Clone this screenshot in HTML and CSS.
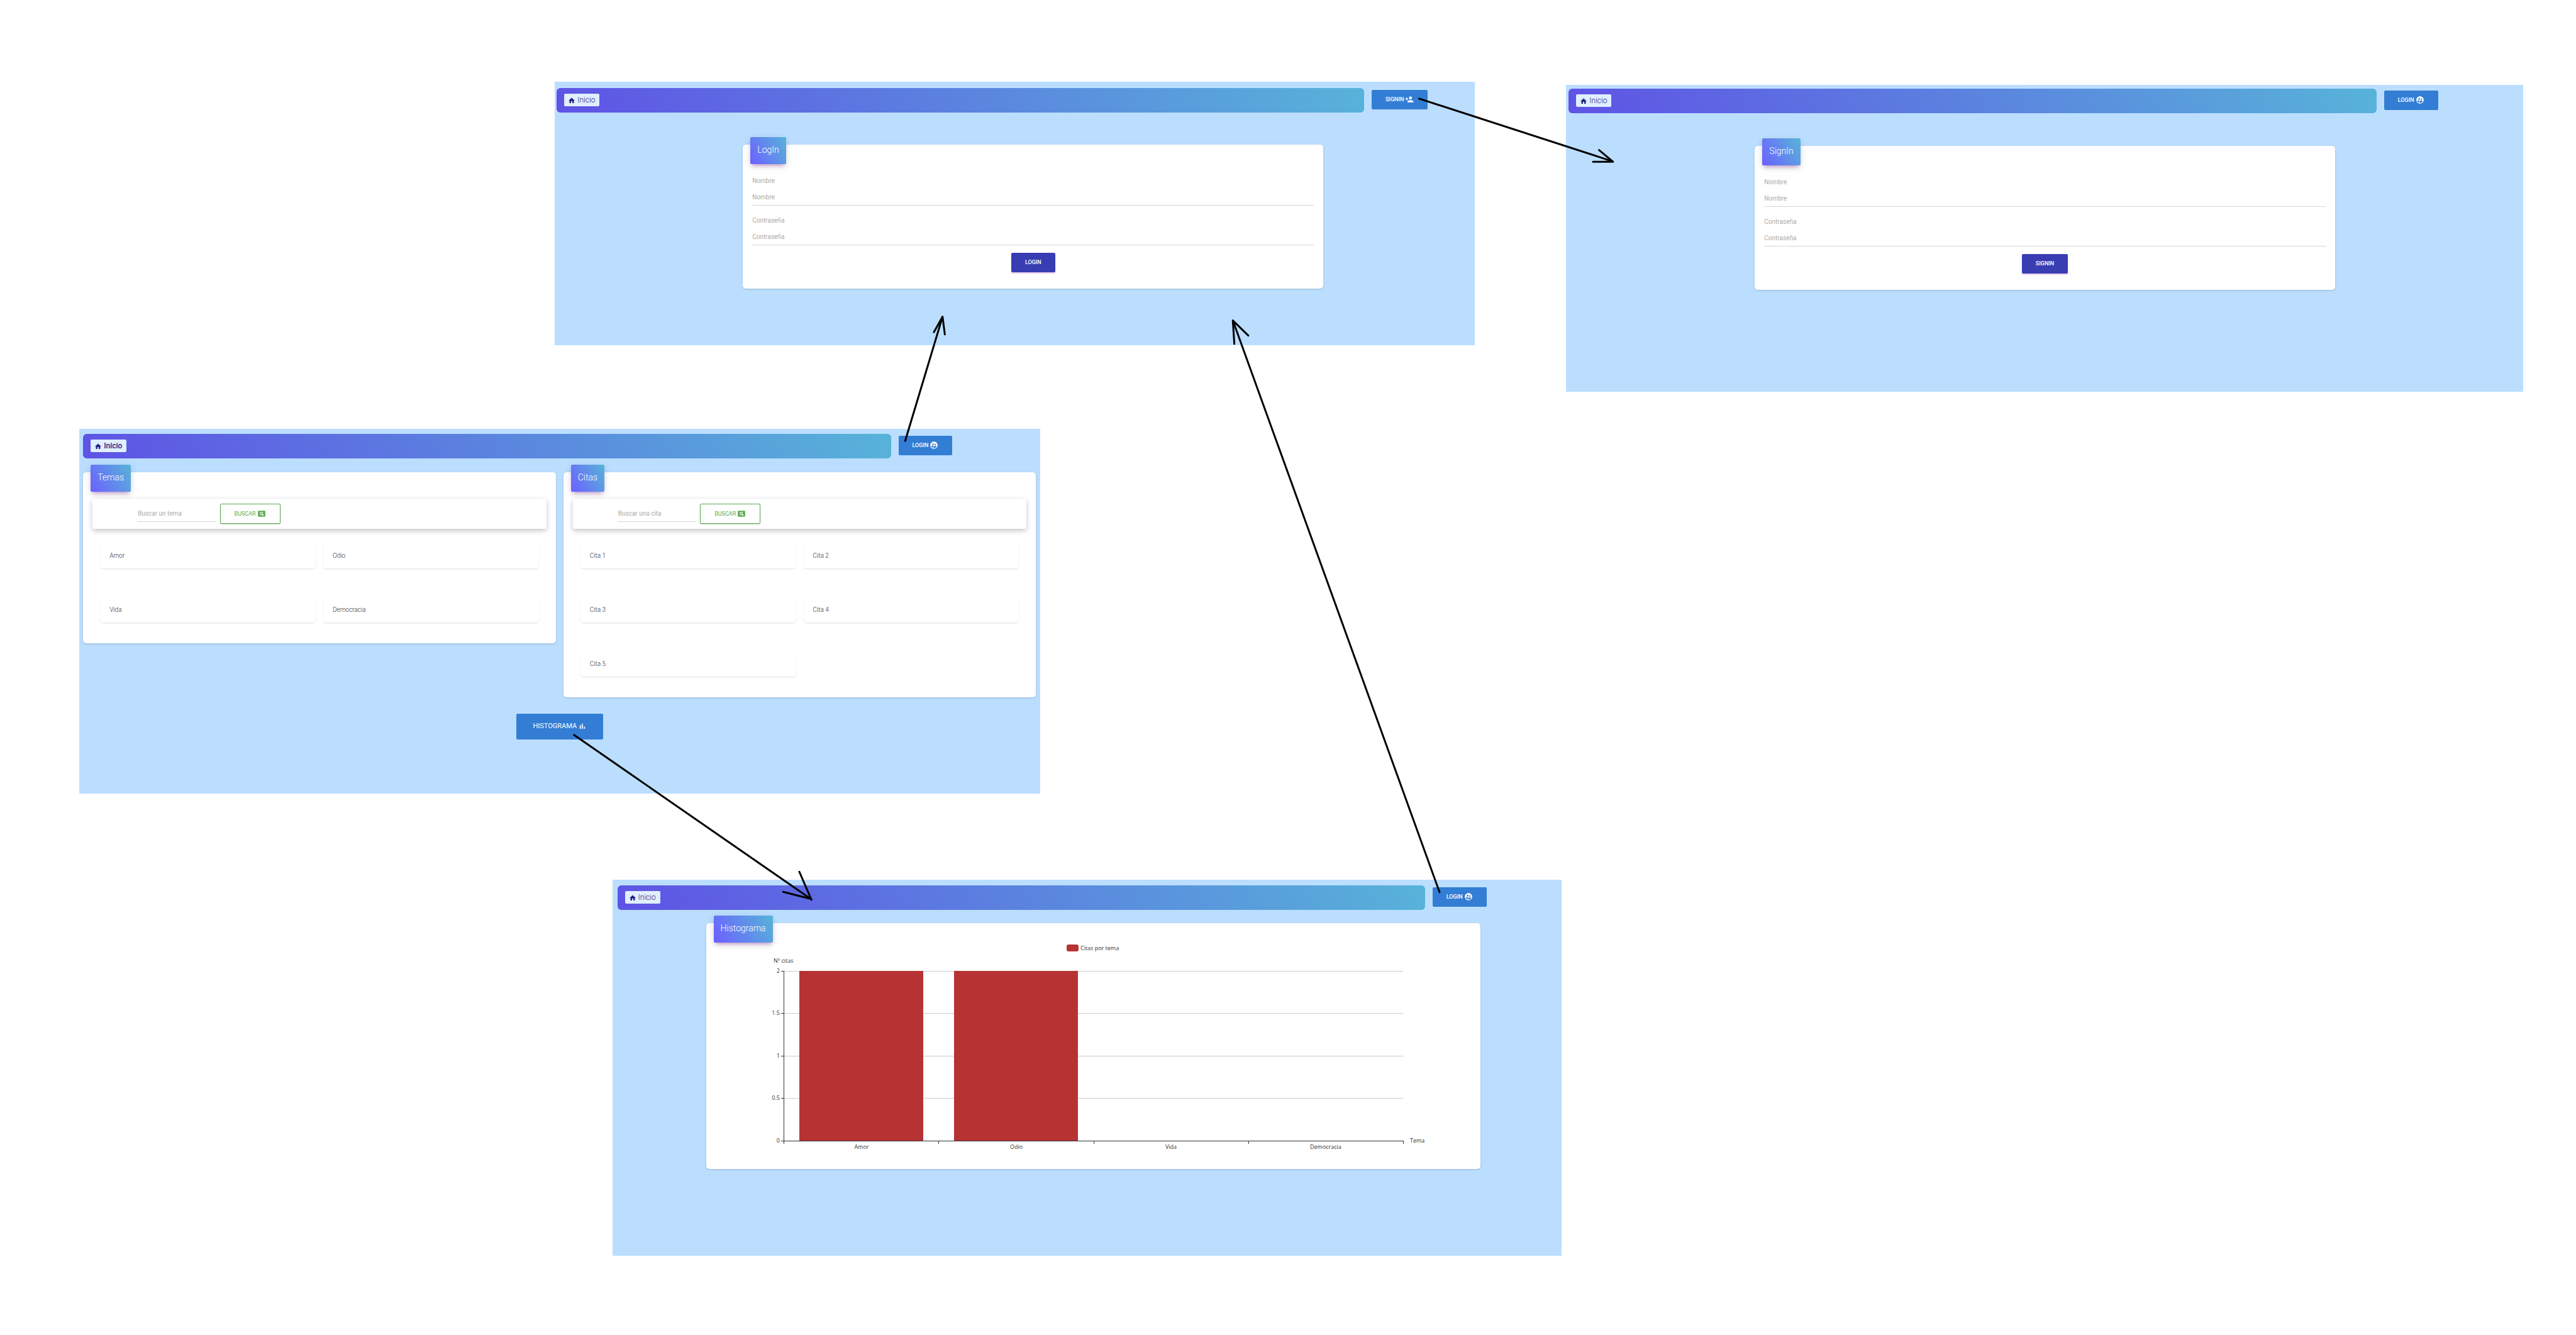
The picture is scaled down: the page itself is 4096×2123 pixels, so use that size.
FILE: index.html
```html
<!DOCTYPE html>
<html lang="es">
<head>
<meta charset="utf-8">
<title>Mapa de navegación</title>
<link rel="stylesheet" href="styles.css">
</head>
<body>
<svg class="sprite" aria-hidden="true">
  <symbol id="i-home" viewBox="0 0 24 24"><path d="M10 20v-6h4v6h5v-8h3L12 3 2 12h3v8z"/></symbol>
  <symbol id="i-add" viewBox="0 0 24 24"><path d="M15 12c2.21 0 4-1.79 4-4s-1.79-4-4-4-4 1.79-4 4 1.79 4 4 4zm-9-2V7H4v3H1v2h3v3h2v-3h3v-2H6zm9 4c-2.67 0-8 1.34-8 4v2h16v-2c0-2.66-5.33-4-8-4z"/></symbol>
  <symbol id="i-user" viewBox="0 0 24 24"><path d="M11.99 2c-5.52 0-10 4.48-10 10s4.48 10 10 10 10-4.48 10-10-4.48-10-10-10zm3.61 6.34c1.07 0 1.93.86 1.93 1.93s-.86 1.93-1.93 1.93-1.93-.86-1.93-1.93c-.01-1.07.86-1.93 1.93-1.93zm-6-1.58c1.3 0 2.36 1.06 2.36 2.36s-1.06 2.36-2.36 2.36-2.36-1.06-2.36-2.36c0-1.31 1.05-2.36 2.36-2.36zm0 9.13v3.75c-2.4-.75-4.3-2.6-5.14-4.96 1.05-1.12 3.67-1.69 5.14-1.69.53 0 1.2.08 1.9.22-1.64.87-1.9 2.02-1.9 2.68zM11.99 20c-.27 0-.53-.01-.79-.04v-4.07c0-1.42 2.94-2.13 4.4-2.13 1.07 0 2.92.39 3.84 1.15-1.17 2.97-4.06 5.09-7.45 5.09z"/></symbol>
  <symbol id="i-page" viewBox="0 0 24 24"><path d="M11.5 9C10.12 9 9 10.12 9 11.5s1.12 2.5 2.5 2.5 2.5-1.12 2.5-2.5S12.88 9 11.5 9zM20 4H4c-1.1 0-2 .9-2 2v12c0 1.1.9 2 2 2h16c1.1 0 2-.9 2-2V6c0-1.1-.9-2-2-2zm-3.21 14.21l-2.91-2.91c-.69.44-1.51.7-2.39.7C9.01 16 7 13.99 7 11.5S9.01 7 11.5 7 16 9.01 16 11.5c0 .88-.26 1.69-.7 2.39l2.91 2.9-1.42 1.42z"/></symbol>
  <symbol id="i-bars" viewBox="0 0 24 24"><path d="M5 9.2h3V19H5zM10.6 5h2.8v14h-2.8zm5.6 8H19v6h-2.8z"/></symbol>
</svg>
<main class="canvas">

  <section class="screen screen-login">
    <header class="top">
      <nav class="bar"><a class="crumb" href="#inicio"><svg class="icon-home"><use href="#i-home"/></svg>Inicio</a></nav>
      <button class="btn" type="button">SIGNIN<svg class="icon"><use href="#i-add"/></svg></button>
    </header>
    <form class="card form">
      <h2 class="badge">LogIn</h2>
      <label class="label" for="l-name">Nombre</label>
      <input class="field" id="l-name" type="text" placeholder="Nombre">
      <label class="label" for="l-pass">Contraseña</label>
      <input class="field" id="l-pass" type="password" placeholder="Contraseña">
      <button class="btn btn-dark" type="button">LOGIN</button>
    </form>
  </section>

  <section class="screen screen-signin">
    <header class="top">
      <nav class="bar"><a class="crumb" href="#inicio"><svg class="icon-home"><use href="#i-home"/></svg>Inicio</a></nav>
      <button class="btn" type="button">LOGIN<svg class="icon"><use href="#i-user"/></svg></button>
    </header>
    <form class="card form">
      <h2 class="badge">SignIn</h2>
      <label class="label" for="s-name">Nombre</label>
      <input class="field" id="s-name" type="text" placeholder="Nombre">
      <label class="label" for="s-pass">Contraseña</label>
      <input class="field" id="s-pass" type="password" placeholder="Contraseña">
      <button class="btn btn-dark" type="button">SIGNIN</button>
    </form>
  </section>

  <section class="screen screen-home">
    <header class="top">
      <nav class="bar"><a class="crumb crumb-active" href="#inicio"><svg class="icon-home"><use href="#i-home"/></svg>Inicio</a></nav>
      <button class="btn" type="button">LOGIN<svg class="icon"><use href="#i-user"/></svg></button>
    </header>
    <div class="columns">
      <section class="card list">
        <h2 class="badge">Temas</h2>
        <form class="search">
          <input class="field" type="text" placeholder="Buscar un tema" aria-label="Buscar un tema">
          <button class="btn btn-outline" type="button">BUSCAR<svg class="icon"><use href="#i-page"/></svg></button>
        </form>
        <ul class="tiles">
          <li class="tile">Amor</li>
          <li class="tile">Odio</li>
          <li class="tile">Vida</li>
          <li class="tile">Democracia</li>
        </ul>
      </section>
      <section class="card list">
        <h2 class="badge">Citas</h2>
        <form class="search">
          <input class="field" type="text" placeholder="Buscar una cita" aria-label="Buscar una cita">
          <button class="btn btn-outline" type="button">BUSCAR<svg class="icon"><use href="#i-page"/></svg></button>
        </form>
        <ul class="tiles">
          <li class="tile">Cita 1</li>
          <li class="tile">Cita 2</li>
          <li class="tile">Cita 3</li>
          <li class="tile">Cita 4</li>
          <li class="tile">Cita 5</li>
        </ul>
      </section>
    </div>
    <button class="btn btn-large" type="button">HISTOGRAMA<svg class="icon"><use href="#i-bars"/></svg></button>
  </section>

  <section class="screen screen-chart">
    <header class="top">
      <nav class="bar"><a class="crumb" href="#inicio"><svg class="icon-home"><use href="#i-home"/></svg>Inicio</a></nav>
      <button class="btn" type="button">LOGIN<svg class="icon"><use href="#i-user"/></svg></button>
    </header>
    <section class="card">
      <h2 class="badge">Histograma</h2>
      <svg class="chart" viewBox="0 0 1231 391" role="img" aria-label="Citas por tema">
        <rect class="series" x="573" y="34" width="19" height="11" rx="3"/>
        <text x="595" y="43">Citas por tema</text>
        <text x="107" y="63">Nº citas</text>
        <path class="grid" d="M124 76.5H1108M124 143.5H1108M124 211.5H1108M124 278.5H1108"/>
        <rect class="series" x="148" y="76" width="197" height="270"/>
        <rect class="series" x="394" y="76" width="197" height="270"/>
        <path class="axis" d="M123.5 76V346M119 76.5H124M119 143.5H124M119 211.5H124M119 278.5H124M119 346.5H1109M123.5 346V351M369.5 346V351M616.5 346V351M862.5 346V351M1108.5 346V351"/>
        <g class="ticks-y">
          <text x="117" y="79">2</text>
          <text x="117" y="146">1.5</text>
          <text x="117" y="214">1</text>
          <text x="117" y="281">0.5</text>
          <text x="117" y="349">0</text>
        </g>
        <g class="ticks-x">
          <text x="247" y="359">Amor</text>
          <text x="493" y="359">Odio</text>
          <text x="739" y="359">Vida</text>
          <text x="985" y="359">Democracia</text>
        </g>
        <text x="1119" y="349">Tema</text>
      </svg>
    </section>
  </section>

  <svg class="arrows" viewBox="0 0 6816 3532" aria-hidden="true">
    <path d="M3755 261L4267 427M4231 397L4268 428L4215 428"/>
    <path d="M2395 1167L2494 838M2471 879L2494 838L2500 885"/>
    <path d="M3809 2361L3262 848M3303 888L3262 848L3266 910"/>
    <path d="M1519 1945L2147 2380M2115 2307L2147 2381M2072 2360L2146 2379"/>
  </svg>
</main>
</body>
</html>
```
FILE: styles.css
```css
* {
  box-sizing: border-box;
}

body {
  margin: 0;
  background: #fff;
  color: #2b2f36;
  font-family: Roboto, "Liberation Sans", sans-serif;
  font-size: 10px;
  line-height: 14px;
}

.sprite {
  display: none;
}

.canvas {
  position: relative;
  width: 100%;
  aspect-ratio: 6816 / 3532;
  overflow: hidden;
}

/* Screens placed freely on the canvas */
.screen {
  position: absolute;
  background: #bbdeff;
}

.screen-login {
  left: 21.54%;
  top: 6.12%;
  width: 35.72%;
  min-height: 419px;
  padding-top: 10px;
}

.screen-signin {
  left: 60.8%;
  top: 6.34%;
  width: 37.14%;
  min-height: 488px;
  padding-top: 6px;
}

.screen-home {
  left: 3.08%;
  top: 32.12%;
  width: 37.31%;
  min-height: 580px;
  padding-top: 8px;
}

.screen-chart {
  left: 23.77%;
  top: 65.91%;
  width: 36.84%;
  min-height: 598px;
  padding-top: 9px;
}

/* Top bar */
.top {
  display: flex;
  align-items: flex-start;
  gap: 12px;
}

.screen-login .top {
  padding: 0 75px 0 3px;
}

.screen-signin .top {
  padding: 0 135px 0 4px;
}

.screen-home .top {
  padding: 0 140px 0 6px;
}

.screen-chart .top {
  padding: 0 119px 0 8px;
}

.bar {
  display: flex;
  flex: 1;
  align-items: center;
  height: 39px;
  padding-left: 12px;
  border-radius: 6px;
  background: linear-gradient(60deg, #5f53e5, #57b3d9);
}

.crumb {
  display: flex;
  align-items: center;
  gap: 3px;
  height: 20px;
  padding: 0 7px 0 6px;
  border-radius: 2px;
  background: #dfefff;
  color: #262388;
  font-size: 12px;
  font-weight: 300;
  text-decoration: none;
}

.crumb-active {
  font-weight: 500;
}

.icon-home {
  width: 12px;
  height: 12px;
  margin-top: 2px;
  fill: currentColor;
}

.icon {
  width: 14px;
  height: 14px;
  fill: currentColor;
}

/* Buttons */
.btn {
  display: flex;
  align-items: center;
  justify-content: center;
  gap: 2px;
  height: 31px;
  padding: 0 22px;
  border: 0;
  border-radius: 2px;
  background: #337ed4;
  color: #fff;
  font-family: inherit;
  font-size: 9px;
  font-weight: 500;
  line-height: 14px;
}

.top .btn {
  margin-top: 3px;
}

.btn-dark {
  margin: 12px auto 0;
  background: #383db2;
  box-shadow: 0 2px 2px rgba(156, 39, 176, 0.25);
}

.btn-outline {
  height: 32px;
  border: 1px solid #5aab4f;
  background: #fff;
  color: #5aab4f;
  font-weight: 400;
  box-shadow: 0 1px 2px rgba(0, 0, 0, 0.2);
}

.btn-large {
  height: 41px;
  margin: 26px auto 0;
  padding: 0 26px;
  font-size: 11px;
  font-weight: 400;
}

/* Cards */
.card {
  position: relative;
  border-radius: 5px;
  background: #fff;
  box-shadow: 0 1px 3px rgba(0, 0, 0, 0.18);
}

.badge {
  position: absolute;
  left: 12px;
  top: -12px;
  margin: 0;
  padding: 10px 11px 13px;
  border-radius: 2px;
  background: linear-gradient(60deg, #6c60ff, #57b4d8);
  color: #fff;
  font-size: 14px;
  font-weight: 300;
  line-height: 20px;
  box-shadow: 0 3px 12px rgba(0, 0, 0, 0.14), 0 5px 6px -3px rgba(156, 39, 176, 0.4);
}

.form {
  padding: 51px 15px 26px;
}

.screen-login .form {
  margin: 51px 241px 0 299px;
}

.screen-signin .form {
  margin: 52px 299px 0 300px;
}

.label {
  display: block;
  color: #aaa;
}

.field {
  display: block;
  width: 100%;
  height: 26px;
  margin-top: 6px;
  padding: 0;
  border: 0;
  border-bottom: 1px solid #d6d6d6;
  background: none;
  color: #555;
  font-family: inherit;
  font-size: 10px;
  outline: 0;
}

.field::placeholder {
  color: #aaa;
  opacity: 1;
}

.field + .label {
  margin-top: 17px;
}

/* Topics and quotes */
.columns {
  display: grid;
  grid-template-columns: 1fr 1fr;
  align-items: start;
  gap: 12px;
  margin-top: 22px;
  padding: 0 7px 0 6px;
}

.list {
  padding: 42px 15px 33px;
}

.search {
  display: flex;
  align-items: center;
  gap: 7px;
  height: 48px;
  padding-left: 72px;
  border-radius: 3px;
  box-shadow: 0 3px 8px rgba(0, 0, 0, 0.24);
}

.search .field {
  width: 19%;
  margin-top: 0;
}

.tiles {
  display: grid;
  grid-template-columns: 1fr 1fr;
  gap: 45px 12px;
  margin: 0;
  padding: 22px 12px 0;
  list-style: none;
}

.tile {
  height: 41px;
  padding: 14px 15px 13px;
  border-radius: 5px;
  font-weight: 300;
  box-shadow: 0 1px 2px rgba(0, 0, 0, 0.13);
}

/* Histogram */
.screen-chart .card {
  margin: 21px 129px 0 149px;
}

.chart {
  display: block;
  width: 100%;
}

.chart text {
  fill: #333;
  font-family: "Open Sans", "Noto Sans", sans-serif;
  font-size: 9px;
}

.series {
  fill: #b73333;
}

.grid {
  fill: none;
  stroke: #ccc;
  shape-rendering: crispEdges;
}

.axis {
  fill: none;
  stroke: #333;
  shape-rendering: crispEdges;
}

.ticks-y {
  text-anchor: end;
}

.ticks-x {
  text-anchor: middle;
}

/* Links between the screens */
.arrows {
  position: absolute;
  inset: 0;
  width: 100%;
  height: 100%;
  fill: none;
  stroke: #000;
  stroke-width: 5;
  stroke-linecap: round;
  stroke-linejoin: round;
  pointer-events: none;
}
```
